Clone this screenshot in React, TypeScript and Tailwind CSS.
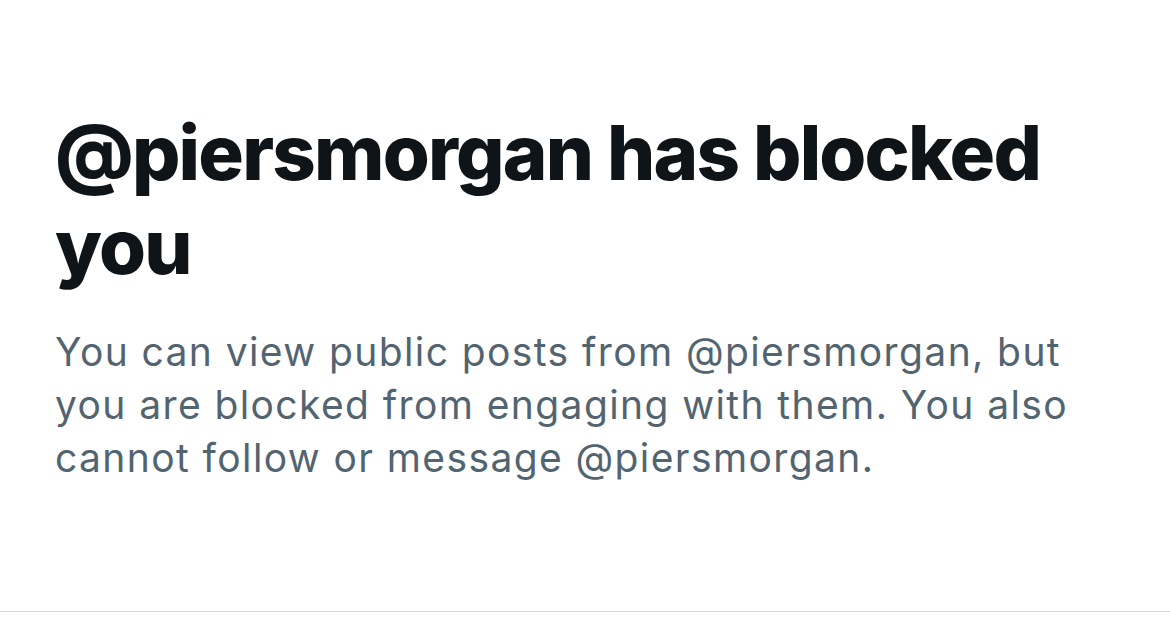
import React from 'react';

export default function App() {
  return (
    <div className="w-[1170px] h-[636px] bg-white overflow-hidden" style={{ fontFamily: 'Inter, "Noto Sans", sans-serif' }}>
      <div className="h-[612px] border-b border-[#cfd9de] pl-[55px] pr-[60px] pt-[105px]">
        <h1 className="text-[76px] leading-[94px] font-extrabold text-[#0f1419] tracking-[-1.8px]">
          @piersmorgan has blocked you
        </h1>
        <p className="mt-[32px] text-[39px] leading-[53px] text-[#536471] tracking-[1.4px]">
          You can view public posts from @piersmorgan, but you are blocked from engaging with them. You also cannot follow or message @piersmorgan.
        </p>
      </div>
    </div>
  );
}
